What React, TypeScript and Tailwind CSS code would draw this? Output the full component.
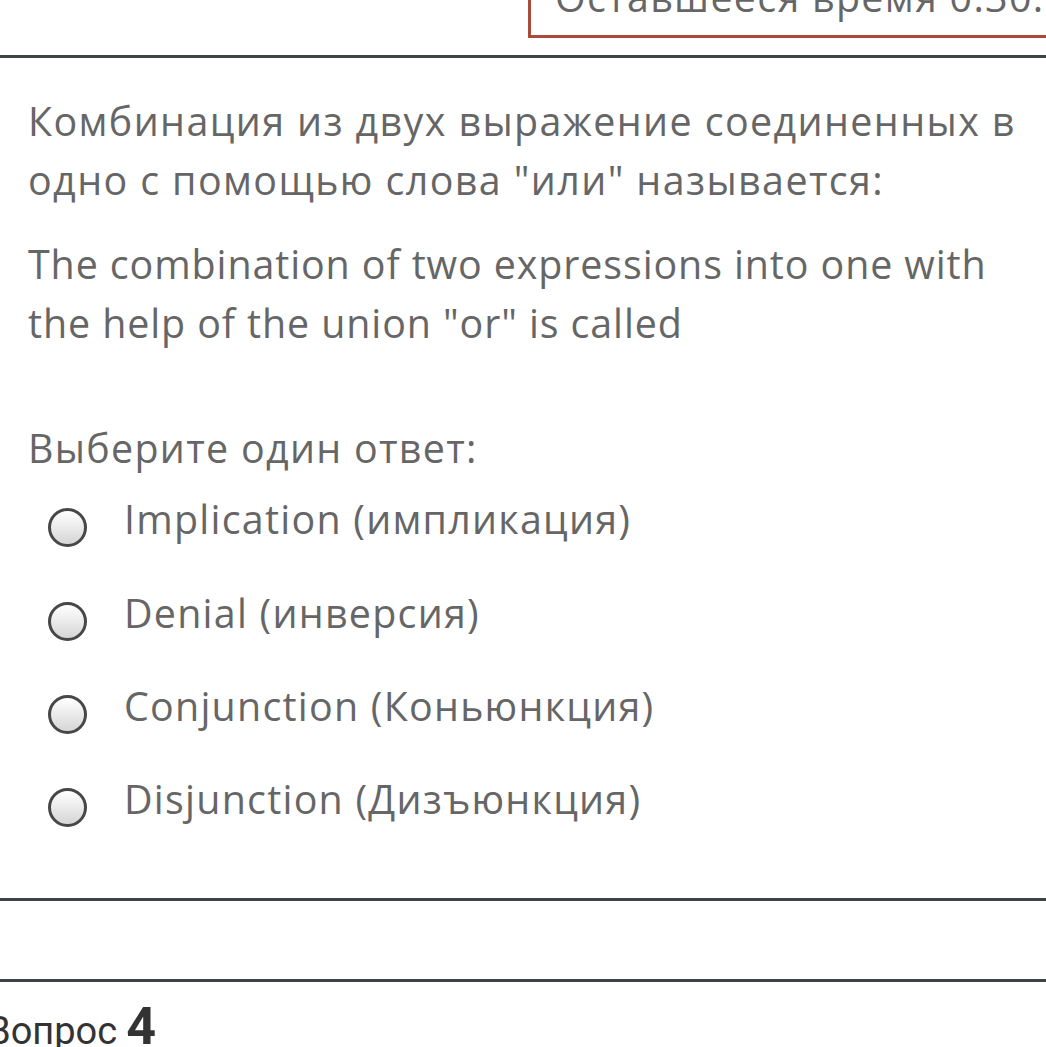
import React from "react";

const options = [
  "Implication (импликация)",
  "Denial (инверсия)",
  "Conjunction (Коньюнкция)",
  "Disjunction (Дизъюнкция)",
];

function Radio() {
  return (
    <span className="mt-[18px] ml-[19.5px] mr-[37.5px] block h-[39px] w-[39px] shrink-0 rounded-full border-[3px] border-[#474747] bg-gradient-to-b from-[#ffffff] to-[#d6d6d6]" />
  );
}

export default function App() {
  return (
    <div
      className="h-[1047px] w-[1046px] overflow-hidden bg-white text-[#666666]"
      style={{ fontFamily: '"Open Sans", "Noto Sans", sans-serif' }}
    >
      <div className="flex h-[55px]">
        <div className="ml-[528px] -mt-[40px] h-[78px] w-[640px] shrink-0 border-[3px] border-[#a94a3a] pl-[24px] pt-[5px] text-[39.4px] leading-[59px] tracking-[1.3px] whitespace-nowrap">
          Оставшееся время 0:30:53
        </div>
      </div>
      <div className="h-[3px] w-full bg-[#3e4346]" />
      <div className="pl-[28px] pr-[20px] pt-[34px] text-[39.4px] leading-[59px]">
        <p className="mb-[24.6px] tracking-[1.4px]">
          Комбинация из двух выражение соединенных в одно с помощью слова "или" называется:
        </p>
        <p className="tracking-[0.9px]">
          The combination of two expressions into one with the help of the union "or" is called
        </p>
        <div className="mt-[66px] tracking-[1.3px]">Выберите один ответ:</div>
        <div className="mt-[12.7px] flex flex-col gap-[34.3px]">
          {options.map((o) => (
            <label key={o} className="flex items-start tracking-[1.25px]">
              <Radio />
              <span>{o}</span>
            </label>
          ))}
        </div>
      </div>
      <div className="mt-[69px] h-[3px] w-full bg-[#3e4346]" />
      <div className="h-[78px]" />
      <div className="h-[3px] w-full bg-[#3e4346]" />
      <div
        className="-ml-[13px] mt-[19px] flex items-baseline whitespace-nowrap leading-none text-[#333333]"
        style={{ fontFamily: 'Roboto, "Liberation Sans", sans-serif' }}
      >
        <span className="text-[38px]">Вопрос</span>
        <span className="ml-[9px] text-[52px] font-bold">4</span>
      </div>
    </div>
  );
}
